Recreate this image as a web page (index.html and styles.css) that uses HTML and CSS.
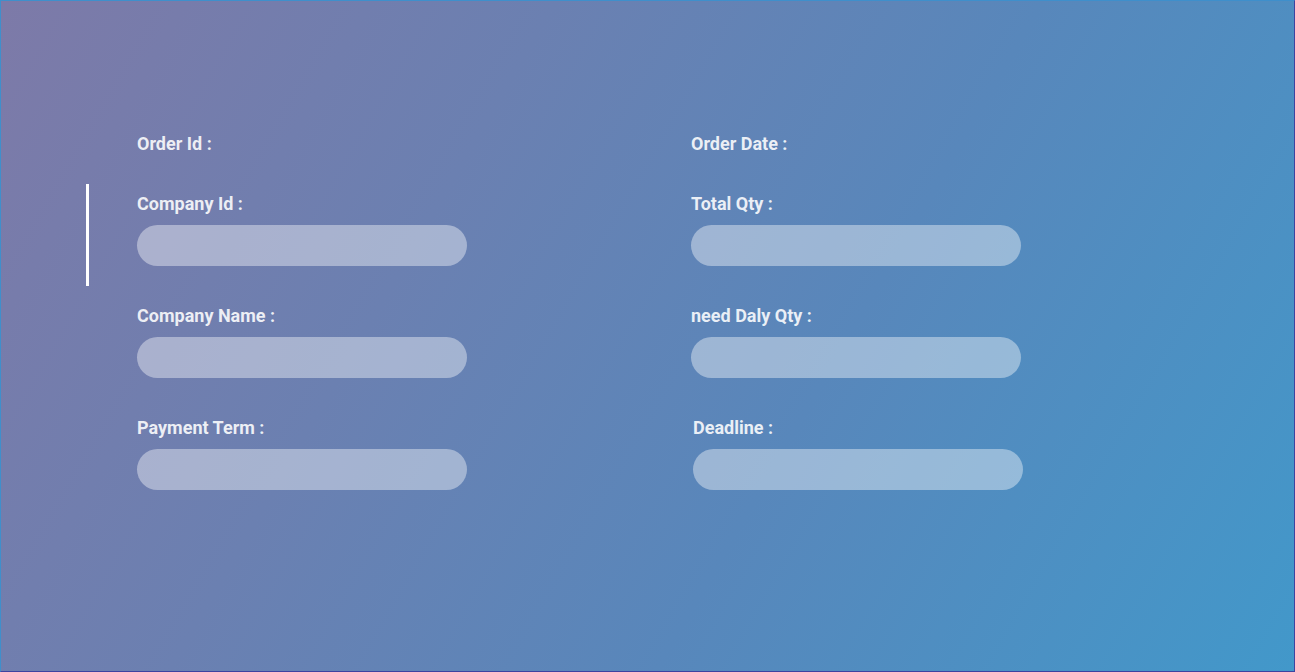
FILE: index.html
```html
<!DOCTYPE html>
<html lang="en">
<head>
<meta charset="utf-8">
<title>Order Form</title>
<link rel="stylesheet" href="styles.css">
</head>
<body>
<div class="page">
  <form class="order-form">
    <div class="field"><label class="label">Order Id :</label></div>
    <div class="field"><label class="label">Order Date :</label></div>

    <div class="field field-active"><label class="label">Company Id :</label><input class="input" type="text"></div>
    <div class="field"><label class="label">Total Qty :</label><input class="input" type="text"></div>

    <div class="field"><label class="label">Company Name :</label><input class="input" type="text"></div>
    <div class="field"><label class="label">need Daly Qty :</label><input class="input" type="text"></div>

    <div class="field"><label class="label">Payment Term :</label><input class="input" type="text"></div>
    <div class="field field-shift"><label class="label">Deadline :</label><input class="input" type="text"></div>
  </form>
</div>
</body>
</html>
```
FILE: styles.css
```css
html, body {
  margin: 0;
  padding: 0;
}

body {
  font-family: Roboto, "Liberation Sans", sans-serif;
}

.page {
  box-sizing: border-box;
  width: 1295px;
  height: 672px;
  border-style: solid;
  border-width: 1px;
  border-color: #3f8fcb #3d43a0 #3d43a0 #3f8fcb;
  background: linear-gradient(120deg, #7d7aa8 0%, #6b80b1 33%, #5887bb 62%, #4298ca 100%);
  padding: 132px 0 0 136px;
}

.order-form {
  display: grid;
  grid-template-columns: 554px 554px;
  row-gap: 39px;
}

.field {
  position: relative;
  display: flex;
  flex-direction: column;
  align-items: flex-start;
}

.field-shift {
  margin-left: 2px;
}

.field-active::before {
  content: "";
  position: absolute;
  left: -51px;
  top: -9px;
  width: 3px;
  height: 102px;
  background: #ffffff;
}

.label {
  font-size: 18px;
  font-weight: 700;
  line-height: 21px;
  color: rgba(255, 255, 255, 0.88);
}

.input {
  box-sizing: border-box;
  margin: 11px 0 0;
  width: 330px;
  height: 41px;
  border: none;
  border-radius: 21px;
  background: rgba(255, 255, 255, 0.4);
  outline: none;
  padding: 0 16px;
  font-family: inherit;
  font-size: 16px;
}
```
